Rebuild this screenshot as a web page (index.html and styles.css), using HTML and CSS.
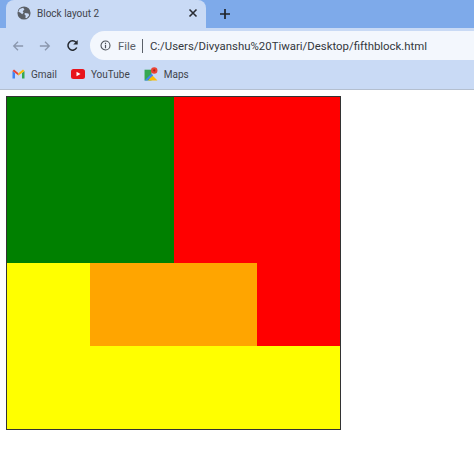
FILE: index.html
```html
<!DOCTYPE html>
<html lang="en">
<head>
  <meta charset="UTF-8" />
  <title>Block layout 2</title>
  <link rel="stylesheet" href="styles.css">
</head>
<body>
  <div class="tab-strip">
    <div class="tab">
      <svg class="tab-icon" width="14" height="14" viewBox="0 0 16 16">
        <circle cx="8" cy="8" r="7.5" fill="#5a5f66"/>
        <path d="M3 3.5 L7 2 L8.5 4 L6.5 6 L7.5 7.5 L6 9.5 L3.5 7.5 L1.5 6.5 Z" fill="#c9daf5"/>
        <path d="M9 8 L13 8.5 L14 10.5 L11 14 L9.5 13.5 L10 11 L8.5 9.5 Z" fill="#c9daf5"/>
      </svg>
      <span class="tab-title">Block layout 2</span>
      <svg class="tab-close" width="10" height="10" viewBox="0 0 10 10">
        <path d="M1.5 1.5 L8.5 8.5 M8.5 1.5 L1.5 8.5" stroke="#2a2d33" stroke-width="1.6"/>
      </svg>
    </div>
    <svg class="new-tab" width="12" height="12" viewBox="0 0 12 12">
      <path d="M6 1 V11 M1 6 H11" stroke="#1f2329" stroke-width="1.7"/>
    </svg>
  </div>

  <div class="toolbar">
    <svg class="nav-icon" width="12" height="12" viewBox="0 0 14 14">
      <path d="M13 7 H2 M7 2 L2 7 L7 12" fill="none" stroke="#8a97ad" stroke-width="1.5"/>
    </svg>
    <svg class="nav-icon" width="12" height="12" viewBox="0 0 14 14">
      <path d="M1 7 H12 M7 2 L12 7 L7 12" fill="none" stroke="#8a97ad" stroke-width="1.5"/>
    </svg>
    <svg class="nav-icon" width="13" height="13" viewBox="0 0 14 14">
      <path d="M11.6 9.2 A5 5 0 1 1 10.8 3.6" fill="none" stroke="#24282e" stroke-width="1.6"/>
      <path d="M12.6 1 V6 H7.8 Z" fill="#24282e"/>
    </svg>
    <div class="omnibox">
      <svg width="11" height="11" viewBox="0 0 12 12">
        <circle cx="6" cy="6" r="4.9" fill="none" stroke="#4d5259" stroke-width="1.2"/>
        <path d="M6 5.2 V9 M6 3 V4.3" stroke="#4d5259" stroke-width="1.3"/>
      </svg>
      <span class="scheme">File</span>
      <span class="divider"></span>
      <span class="url">C:/Users/Divyanshu%20Tiwari/Desktop/fifthblock.html</span>
    </div>
  </div>

  <div class="bookmarks">
    <div class="bookmark">
      <svg width="13" height="10" viewBox="0 0 13 10">
        <path d="M0.5 2 V9.5 H3 V4 Z" fill="#4285f4"/>
        <path d="M12.5 2 V9.5 H10 V4 Z" fill="#34a853"/>
        <path d="M0.5 2 L2 0.6 L6.5 4.2 L6.5 6.6 Z" fill="#ea4335"/>
        <path d="M12.5 2 L11 0.6 L6.5 4.2 L6.5 6.6 Z" fill="#fbbc04"/>
      </svg>
      <span>Gmail</span>
    </div>
    <div class="bookmark">
      <svg width="14" height="10" viewBox="0 0 14 10">
        <rect width="14" height="10" rx="2.5" fill="#e8141c"/>
        <path d="M5.5 2.8 L9.5 5 L5.5 7.2 Z" fill="#fff"/>
      </svg>
      <span>YouTube</span>
    </div>
    <div class="bookmark">
      <svg width="14" height="14" viewBox="0 0 13 13">
        <path d="M0.5 2.5 H7 V12.5 H0.5 Z" fill="#34a853"/>
        <path d="M7 7 L12.5 12.5 H4 Z" fill="#fbbc04"/>
        <path d="M0.5 12.5 L7 6 L8.5 8 L3 12.5 Z" fill="#4285f4"/>
        <circle cx="9.5" cy="3.2" r="3" fill="#ea4335"/>
        <circle cx="9.5" cy="3.2" r="1" fill="#a52714"/>
      </svg>
      <span>Maps</span>
    </div>
  </div>

  <div class="page">
    <div class="outer">
      <div class="yellow"></div>
      <div class="green"></div>
      <div class="red"></div>
      <div class="orange"></div>
    </div>
  </div>
</body>
</html>
```

FILE: styles.css
```css
html, body {
  margin: 0;
  background-color: #fff;
}
body {
  font-family: Roboto, "Noto Sans", Arial, sans-serif;
  color: #3f444b;
  width: 474px;
  overflow: hidden;
}
.tab-strip {
  height: 28px;
  background-color: #7eaaea;
  display: flex;
  align-items: center;
}
.tab {
  width: 200px;
  height: 28px;
  margin-left: 6px;
  background-color: #c9daf5;
  border-radius: 8px 8px 0 0;
  display: flex;
  align-items: center;
  box-sizing: border-box;
  padding: 0 8px 2px 11px;
}
.tab-icon {
  flex: none;
}
.tab-title {
  flex: 1;
  margin-left: 6px;
  font-size: 10px;
}
.new-tab {
  margin-left: 13px;
}
.toolbar {
  height: 29px;
  padding: 3px 0 0 12px;
  background-color: #c9daf5;
  display: flex;
  align-items: center;
  gap: 15px;
}
.omnibox {
  flex: 1;
  height: 29px;
  margin-left: -4px;
  background-color: #f3f7fd;
  border-radius: 15px 0 0 15px;
  display: flex;
  align-items: center;
  padding-left: 10px;
  font-size: 11.4px;
  white-space: nowrap;
}
.scheme {
  margin-left: 7px;
  color: #5a6068;
}
.divider {
  width: 1px;
  height: 14px;
  margin: 0 7px 0 6px;
  background-color: #5a6068;
}
.url {
  color: #33373d;
}
.bookmarks {
  height: 28px;
  padding-bottom: 1px;
  background-color: #c9daf5;
  border-bottom: 1px solid #b4bfcf;
  display: flex;
  align-items: center;
  padding-left: 12px;
  gap: 14px;
  font-size: 10px;
}
.bookmark {
  display: flex;
  align-items: center;
  gap: 6px;
}
.page {
  padding: 6px 0 0 6px;
}
.outer {
  width: 333px;
  height: 332px;
  border: 1px solid #333;
  display: grid;
  grid-template-columns: repeat(4, 1fr);
  grid-template-rows: repeat(4, 1fr);
}
.green {
  grid-area: 1 / 1 / 3 / 3;
  background-color: green;
}
.red {
  grid-area: 1 / 3 / 4 / 5;
  background-color: red;
}
.yellow {
  grid-area: 3 / 1 / 5 / 5;
  background-color: yellow;
}
.orange {
  grid-area: 3 / 2 / 4 / 4;
  background-color: orange;
}
```
